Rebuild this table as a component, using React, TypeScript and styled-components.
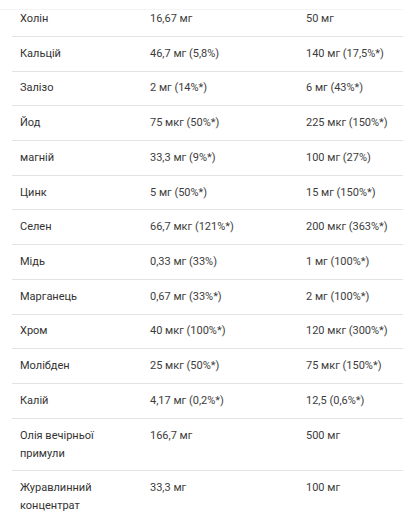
import React from "react";
import styled, { createGlobalStyle } from "styled-components";

const GlobalStyle = createGlobalStyle`
  html, body { margin: 0; padding: 0; background: #ffffff; }
  body { font-family: Roboto, "Noto Sans", Arial, sans-serif; }
`;

const Page = styled.div`
  width: 403px;
  height: 512px;
  overflow: hidden;
  padding-top: 9px;
  box-sizing: border-box;
`;

const TopRule = styled.div`
  height: 1px;
  background: #f4f4f4;
`;

const Table = styled.div`
  margin-left: 12px;
  width: 391px;
`;

const Row = styled.div<{ $first?: boolean }>`
  display: grid;
  grid-template-columns: 130px 156px 1fr;
  padding: ${(p) => (p.$first ? "0" : "7.87px")} 0 7.87px;
  border-bottom: 1px solid #e3e3e3;
`;

const Cell = styled.div<{ $name?: boolean }>`
  padding: 0 8px;
  font-size: 11px;
  line-height: 18px;
  color: ${(p) => (p.$name ? "#333333" : "#3d3d3d")};
`;

const rows: [string, string, string][] = [
  ["Холін", "16,67 мг", "50 мг"],
  ["Кальцій", "46,7 мг (5,8%)", "140 мг (17,5%*)"],
  ["Залізо", "2 мг (14%*)", "6 мг (43%*)"],
  ["Йод", "75 мкг (50%*)", "225 мкг (150%*)"],
  ["магній", "33,3 мг (9%*)", "100 мг (27%)"],
  ["Цинк", "5 мг (50%*)", "15 мг (150%*)"],
  ["Селен", "66,7 мкг (121%*)", "200 мкг (363%*)"],
  ["Мідь", "0,33 мг (33%)", "1 мг (100%*)"],
  ["Марганець", "0,67 мг (33%*)", "2 мг (100%*)"],
  ["Хром", "40 мкг (100%*)", "120 мкг (300%*)"],
  ["Молібден", "25 мкг (50%*)", "75 мкг (150%*)"],
  ["Калій", "4,17 мг (0,2%*)", "12,5 (0,6%*)"],
  ["Олія вечірньої примули", "166,7 мг", "500 мг"],
  ["Журавлинний концентрат", "33,3 мг", "100 мг"],
];

export default function App() {
  return (
    <>
      <GlobalStyle />
      <Page>
        <TopRule />
        <Table>
          {rows.map(([n, a, b], i) => (
            <Row key={n} $first={i === 0}>
              <Cell $name>{n}</Cell>
              <Cell>{a}</Cell>
              <Cell>{b}</Cell>
            </Row>
          ))}
        </Table>
      </Page>
    </>
  );
}
